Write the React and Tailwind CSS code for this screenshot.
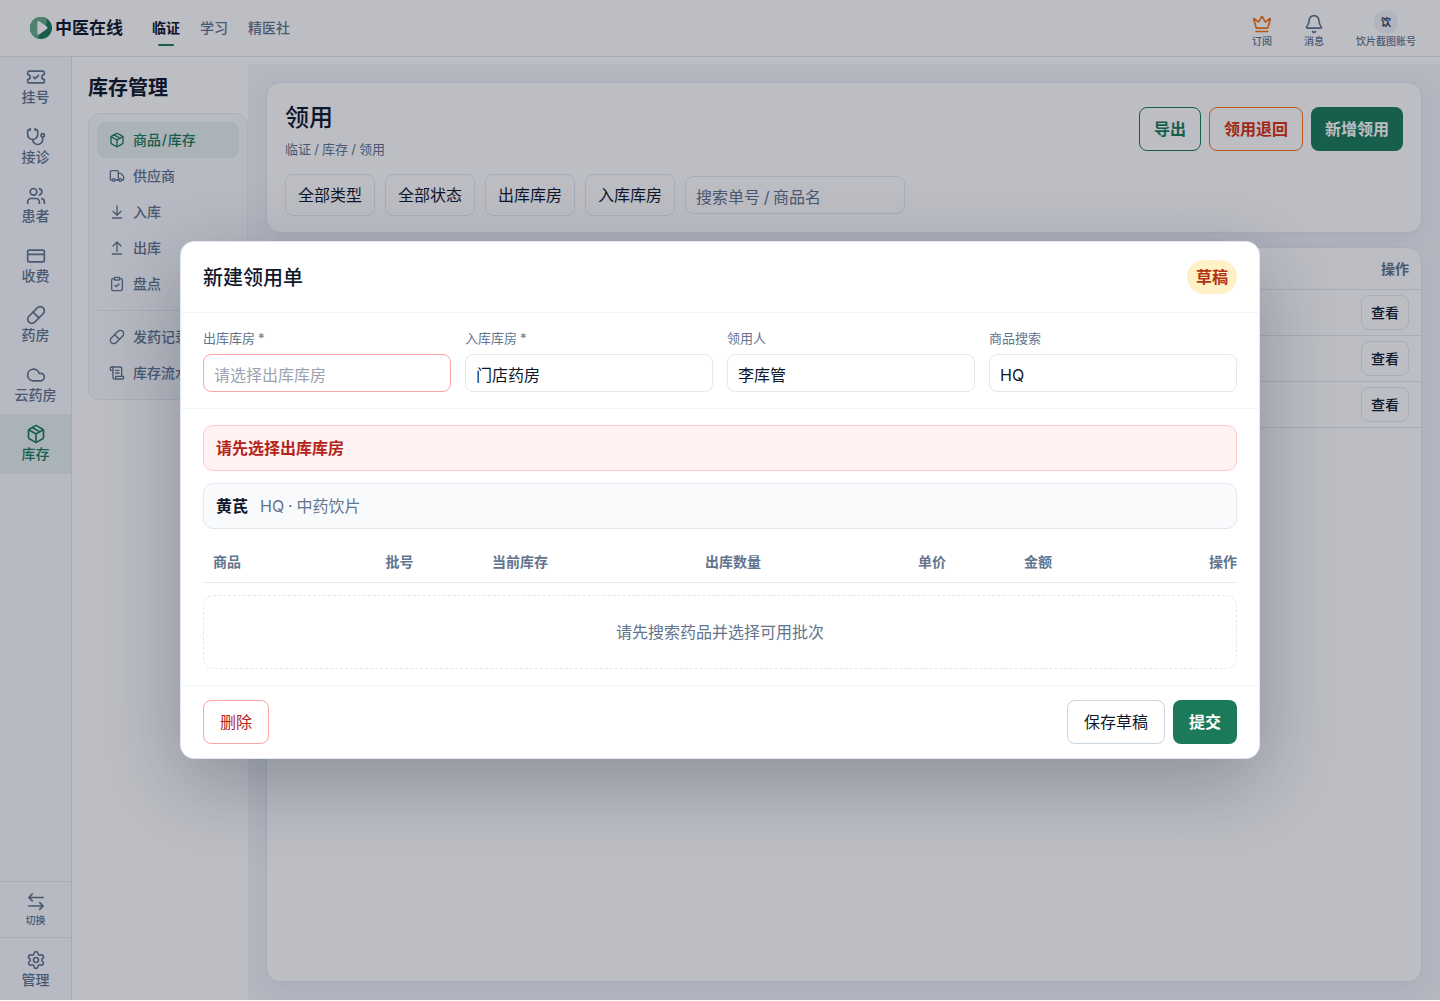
import React from 'react';
import {
  TicketCheck, Stethoscope, Users, CreditCard, Pill, Cloud, Settings,
  Truck, ClipboardCheck, ScrollText, Crown, Bell,
} from 'lucide-react';

const SwapIcon = ({ size = 20 }) => (
  <svg width={size} height={size} viewBox="0 0 20 20" fill="none" stroke="currentColor" strokeWidth="1.7" strokeLinecap="round" strokeLinejoin="round">
    <path d="M17.2 5.5H2.8M6.2 2.2 2.9 5.5l3.3 3.3" />
    <path d="M2.8 14h14.4M13.8 10.7l3.3 3.3-3.3 3.3" />
  </svg>
);

const ArrowDownLine = ({ size = 16 }) => (
  <svg width={size} height={size} viewBox="0 0 24 24" fill="none" stroke="currentColor" strokeWidth="2" strokeLinecap="round" strokeLinejoin="round">
    <path d="M12 17V3M6 11l6 6 6-6M19 21H5" />
  </svg>
);

const ArrowUpLine = ({ size = 16 }) => (
  <svg width={size} height={size} viewBox="0 0 24 24" fill="none" stroke="currentColor" strokeWidth="2" strokeLinecap="round" strokeLinejoin="round">
    <path d="m18 9-6-6-6 6M12 3v14M5 21h14" />
  </svg>
);

const CubeIcon = ({ size = 20, strokeWidth = 2 }) => (
  <svg width={size} height={size} viewBox="0 0 24 24" fill="none" stroke="currentColor" strokeWidth={strokeWidth} strokeLinecap="round" strokeLinejoin="round">
    <path d="M11 21.73a2 2 0 0 0 2 0l7-4A2 2 0 0 0 21 16V8a2 2 0 0 0-1-1.73l-7-4a2 2 0 0 0-2 0l-7 4A2 2 0 0 0 3 8v8a2 2 0 0 0 1 1.73z" />
    <path d="M12 22V12M3.29 7 12 12l8.71-5M7.5 4.27l9 5.15" />
  </svg>
);

const Logo = () => (
  <svg width="22" height="22" viewBox="0 0 22 22">
    <circle cx="11" cy="11" r="11" fill="#1b7a5a" />
    <path d="M16.5 1.5A11 11 0 1 0 8.5 21.7C8 18 10 15 13 12 16 9 17.500 5 16.5 1.5Z" fill="#6aa988" />
    <path d="M7.3 5.4c0-1.1 1-1.7 1.900-1.200l7.600 5.400c.9.6.9 1.900 0 2.500l-7.600 5.300c-.9.5-1.900-.1-1.900-1.200Z" fill="#fff" />
  </svg>
);

const rail = [
  ['挂号', TicketCheck], ['接诊', Stethoscope], ['患者', Users], ['收费', CreditCard],
  ['药房', Pill], ['云药房', Cloud], ['库存', CubeIcon, true],
];

const menu = [
  [<>商品<span className="px-[0.8px]">/</span>库存</>, CubeIcon, true],
  ['供应商', Truck], ['入库', ArrowDownLine], ['出库', ArrowUpLine], ['盘点', ClipboardCheck],
];
const menu2 = [['发药记录', Pill], ['库存流水', ScrollText]];

function MenuItem({ label, Icon, active }) {
  return (
    <div className={`flex h-9 items-center gap-2 rounded-lg px-3 text-sm font-medium ${active ? 'bg-[#e6f0ed] text-[#1b7a5a]' : 'text-slate-500'}`}>
      <Icon size={16} strokeWidth={2} />
      <span className="whitespace-nowrap">{label}</span>
    </div>
  );
}

function Field({ label, value, placeholder }) {
  return (
    <div className="flex flex-col gap-1.5">
      <span className="text-[13px] leading-5 text-slate-500 [word-spacing:-0.6px]">{label}</span>
      <div className={`flex h-[38px] items-center rounded-lg border px-2.5 pt-1 ${placeholder ? 'border-[#fca5a5] text-[#9ca3af]' : 'border-slate-200 text-slate-900'}`}>
        {value || placeholder}
      </div>
    </div>
  );
}

function Header() {
  return (
    <header className="flex h-[57px] shrink-0 justify-between border-b border-[#e2e6ea] bg-white pl-[30px] pr-6">
      <div className="flex h-14 items-center">
        <Logo />
        <span className="ml-[3px] pt-0.5 text-[17px] font-bold">中医在线</span>
        <nav className="ml-[29px] flex gap-5 text-sm font-medium text-slate-500">
          <span className="relative font-bold text-slate-900">
            临证
            <i className="absolute left-1.5 top-[26px] h-0.5 w-4 rounded-full bg-[#1b7a5a]" />
          </span>
          <span>学习</span>
          <span>精医社</span>
        </nav>
      </div>
      <div className="flex text-[10px] font-medium leading-[14px] text-slate-500">
        <div className="mr-8 flex flex-col items-center pt-3.5">
          <Crown size={20} strokeWidth={2} className="text-[#f97316]" />
          <span>订阅</span>
        </div>
        <div className="mr-8 flex flex-col items-center pt-3.5">
          <Bell size={20} strokeWidth={2} />
          <span>消息</span>
        </div>
        <div className="flex flex-col items-center pt-2.5">
          <span className="flex size-6 items-center justify-center rounded-full bg-[#eef2f9] text-[10px] font-bold text-slate-700">饮</span>
          <span>饮片截图账号</span>
        </div>
      </div>
    </header>
  );
}

function Rail() {
  return (
    <aside className="flex w-[72px] shrink-0 flex-col border-r border-[#e2e6ea] bg-slate-50 text-sm font-medium leading-5 text-slate-500">
      {rail.map(([label, Icon, active]) => (
        <div key={label} className={`flex h-[59.5px] flex-col items-center pt-2.5 ${active ? 'bg-[#e6f0ed] text-[#1b7a5a]' : ''}`}>
          <Icon size={20} strokeWidth={2} />
          <span>{label}</span>
        </div>
      ))}
      <div className="mt-auto flex h-14 flex-col items-center border-t border-[#e2e6ea] pt-2.5">
        <SwapIcon />
        <span className="text-[10px] leading-4">切换</span>
      </div>
      <div className="flex h-[63px] flex-col items-center border-t border-[#e2e6ea] pt-3">
        <Settings size={20} strokeWidth={2} />
        <span>管理</span>
      </div>
    </aside>
  );
}

function Modal() {
  return (
    <div className="flex h-[518px] w-[1080px] flex-col rounded-[14px] border border-slate-200 bg-white shadow-[0_24px_80px_rgba(15,23,42,0.28)]">
      <div className="flex h-[71px] shrink-0 items-center justify-between border-b border-slate-100 px-[22px]">
        <h2 className="pt-0.5 text-xl font-medium">新建领用单</h2>
        <span className="flex h-[34px] items-center rounded-full bg-[#fef0c7] px-[9px] font-bold text-[#b43212]">草稿</span>
      </div>
      <div className="grid h-24 shrink-0 grid-cols-4 gap-3.5 border-b border-slate-100 px-[22px] pt-[15px]">
        <Field label="出库库房 *" placeholder="请选择出库库房" />
        <Field label="入库库房 *" value="门店药房" />
        <Field label="领用人" value="李库管" />
        <Field label="商品搜索" value="HQ" />
      </div>
      <div className="flex grow flex-col px-[22px] pt-4">
        <div className="flex h-[46px] items-center rounded-[10px] border border-[#fecaca] bg-[#fef2f2] px-3 font-bold text-[#b42318]">请先选择出库库房</div>
        <div className="mt-3 flex h-[46px] items-center gap-3 rounded-[10px] border border-slate-200 bg-slate-50 px-3">
          <b>黄芪</b>
          <span className="text-slate-500 [word-spacing:-0.6px]">HQ · 中药饮片</span>
        </div>
        <div className="mt-3 grid h-[42px] grid-cols-[172.5px_106.5px_213px_213px_106px_1fr_38px] items-center border-b border-slate-200 text-sm font-bold text-slate-500">
          {['商品', '批号', '当前库存', '出库数量', '单价', '金额', '操作'].map((t) => (
            <span key={t} className="pl-2.5">{t}</span>
          ))}
        </div>
        <div className="mt-3 flex h-[74px] items-center justify-center rounded-[10px] border border-dashed border-slate-200 text-slate-500">请先搜索药品并选择可用批次</div>
      </div>
      <div className="flex h-[73px] shrink-0 items-start gap-2 border-t border-slate-100 px-[22px] pt-3.5">
        <button className="mr-auto h-11 rounded-lg border border-[#fca5a5] px-4 text-[#b42318]">删除</button>
        <button className="h-11 rounded-lg border border-slate-300 px-4">保存草稿</button>
        <button className="h-11 rounded-lg bg-[#1b7a5a] px-4 font-bold text-white">提交</button>
      </div>
    </div>
  );
}

export default function App() {
  return (
    <div className="relative flex h-[1000px] flex-col overflow-hidden bg-white font-['Inter','Noto_Sans_CJK_SC',sans-serif] text-base text-slate-900">
      <Header />
      <div className="flex min-h-0 grow">
        <Rail />
        <aside className="flex w-44 shrink-0 flex-col bg-white pl-4 pt-4">
          <h1 className="h-10 text-xl font-bold leading-[30px]">库存管理</h1>
          <div className="flex flex-col rounded-xl border border-[#e8edf2] bg-slate-50 p-2">
            {menu.map(([label, Icon, active], i) => <MenuItem key={i} label={label} Icon={Icon} active={active} />)}
            <div className="my-2 h-px bg-slate-200" />
            {menu2.map(([label, Icon]) => <MenuItem key={label} label={label} Icon={Icon} />)}
          </div>
        </aside>
        <main className="mt-[7px] flex grow flex-col gap-3.5 bg-[#f2f5fa] p-[18px]">
          <section className="h-[151px] shrink-0 rounded-[14px] border border-slate-200 bg-white px-[18px] shadow-[0_8px_24px_rgba(15,23,42,0.05)]">
            <div className="flex h-[91px] justify-between">
              <div className="pt-[17px]">
                <h2 className="text-2xl font-medium leading-9">领用</h2>
                <p className="mt-[3px] text-[13px] leading-5 text-slate-500 [word-spacing:-0.5px]">临证 / 库存 / 领用</p>
              </div>
              <div className="flex gap-2 pt-6 font-bold">
                <button className="h-11 rounded-lg border border-[#1b7a5a] px-3.5 text-[#1b7a5a]">导出</button>
                <button className="h-11 rounded-lg border border-[#f97316] px-3.5 text-[#dc2f12]">领用退回</button>
                <button className="h-11 rounded-lg bg-[#1b7a5a] px-3.5 text-white">新增领用</button>
              </div>
            </div>
            <div className="flex items-center gap-2.5">
              {['全部类型', '全部状态', '出库库房', '入库库房'].map((t) => (
                <span key={t} className="flex h-[42px] items-center rounded-lg border border-slate-200 px-3">{t}</span>
              ))}
              <span className="flex h-[38px] w-[220px] items-center rounded-lg border border-slate-200 px-2.5 pt-1 text-slate-500 [word-spacing:-0.9px]">搜索单号 / 商品名</span>
            </div>
          </section>
          <section className="grow rounded-[14px] border border-slate-200 bg-white shadow-[0_8px_24px_rgba(15,23,42,0.05)]">
            <div className="flex h-[42px] items-center justify-end border-b border-slate-200 px-3 text-sm font-bold text-slate-500">操作</div>
            {[1, 2, 3].map((n) => (
              <div key={n} className="flex h-[46px] items-center justify-end border-b border-slate-200 px-3">
                <button className="h-[35px] rounded-lg border border-slate-200 px-[9px] text-sm font-medium">查看</button>
              </div>
            ))}
          </section>
        </main>
      </div>
      <div className="absolute inset-0 flex items-center justify-center bg-[rgba(15,23,42,0.28)]">
        <Modal />
      </div>
    </div>
  );
}
